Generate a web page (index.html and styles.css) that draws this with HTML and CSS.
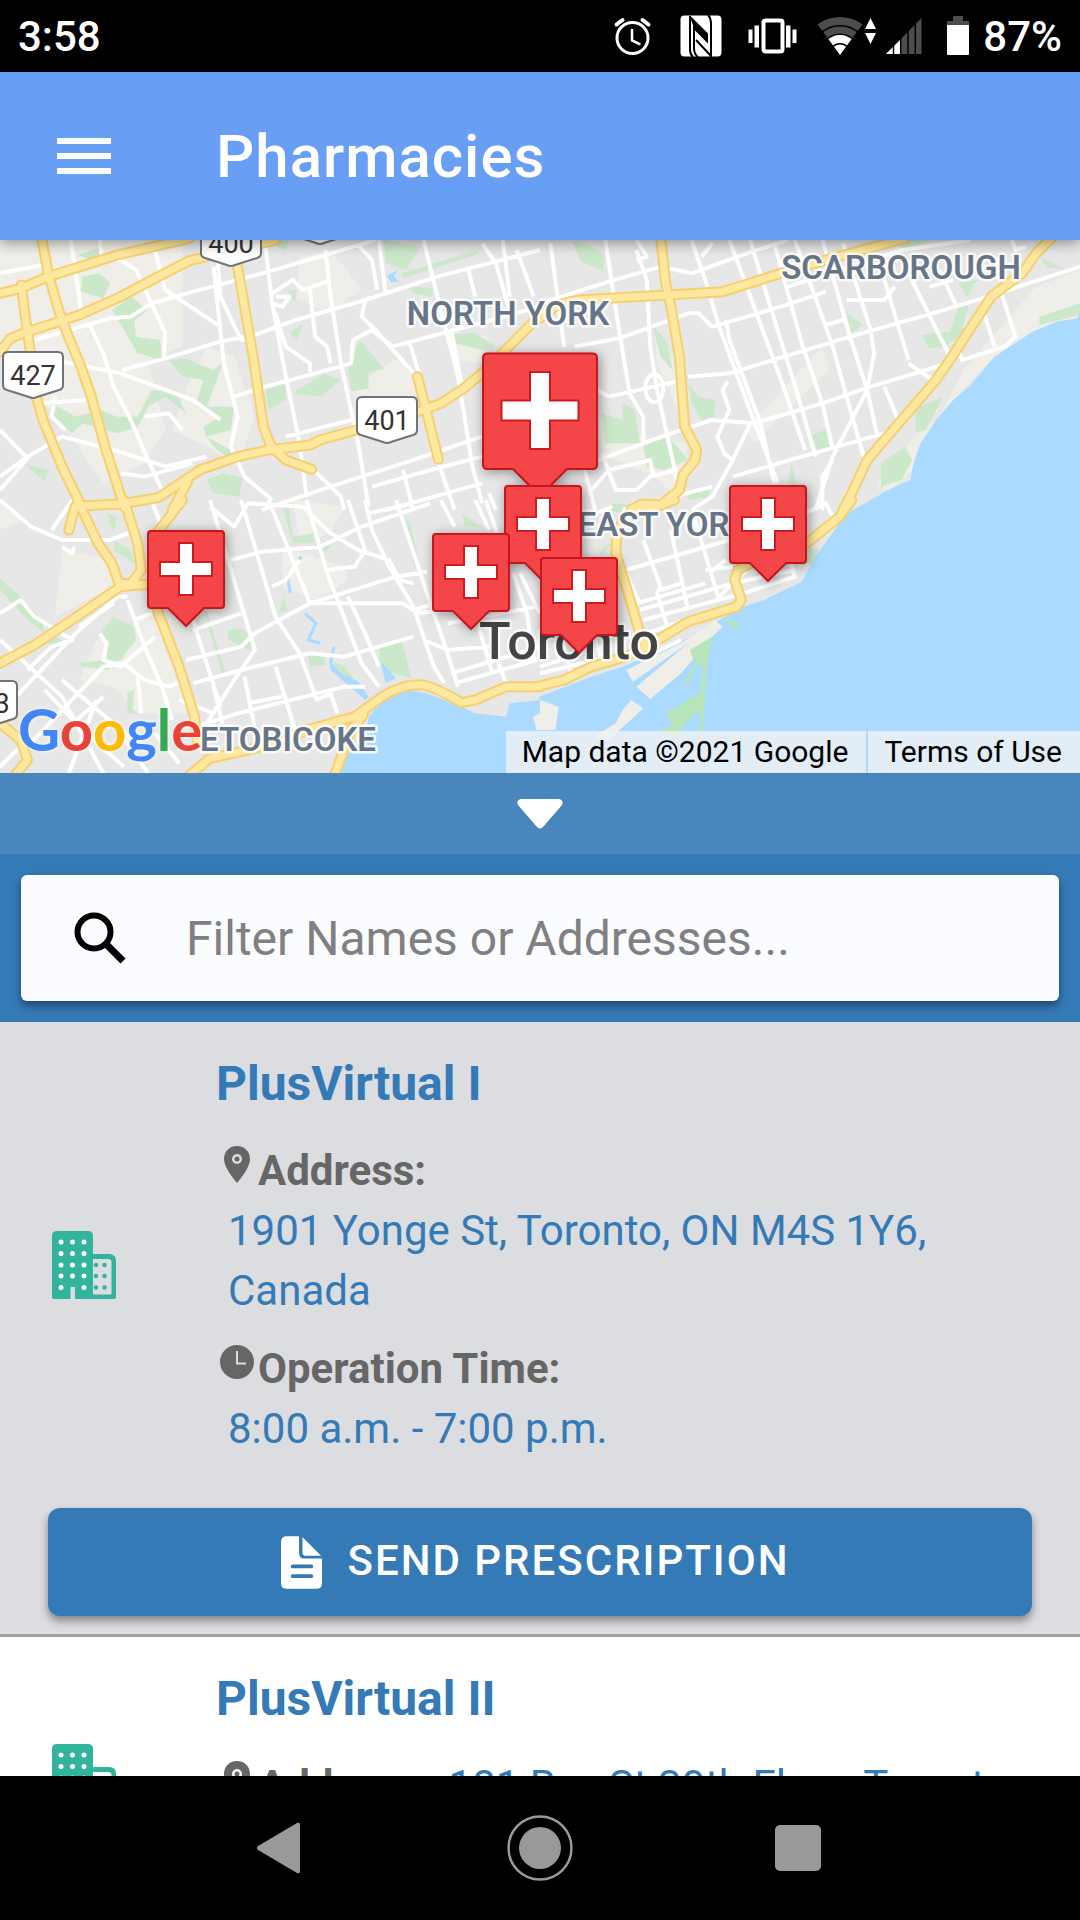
FILE: index.html
```html
<!DOCTYPE html>
<html lang="en">
<head>
<meta charset="utf-8">
<meta name="viewport" content="width=device-width, initial-scale=1">
<title>Pharmacies</title>
<link rel="stylesheet" href="styles.css">
</head>
<body>
<div class="app">
  <div class="status">
    <span>3:58</span>
    <svg class="tray" viewBox="0 0 360 72" aria-hidden="true">
      <defs><clipPath id="fan"><path d="M228 55 198 14H258Z"/></clipPath></defs>
      <g fill="none" stroke="#fff" stroke-width="3" stroke-linecap="round">
        <circle cx="20.5" cy="38" r="15.5"/>
        <path d="M20 30V40.500L27.500 44" stroke-width="2.500"/>
        <path d="M4.500 24.500 10.500 20M30.500 20 36.500 24.500" stroke-width="4"/>
      </g>
      <rect x="68.500" y="15.500" width="41" height="41" rx="4" fill="#fff"/>
      <path d="M78 16V50Q78 54 81 57M99 57V24Q99 18 96 15M78 17 95 34V41L82 28V48Q82 54 86 57M84 40 99 56" fill="none" stroke="#000" stroke-width="2"/>
      <path d="M78 17 95 34V42L82 28Z" fill="#000"/>
      <rect x="151.500" y="20.500" width="19" height="31" rx="2" fill="none" stroke="#fff" stroke-width="4"/>
      <path d="M136.500 29.500h4V43h-4zM142.500 25.500h4.500v22h-4.500zM174 25.500h4.500v22H174zM180.500 29.500h4V43h-4z" fill="#fff"/>
      <g clip-path="url(#fan)" fill="none" stroke-width="8">
        <circle cx="228" cy="54" r="33" stroke="#4d4d4d"/>
        <circle cx="228" cy="54" r="24" stroke="#4d4d4d" stroke-width="7"/>
        <circle cx="228" cy="54" r="15" stroke="#fff"/>
        <circle cx="228" cy="54" r="9.500" fill="#fff"/>
      </g>
      <path d="M253 29 258.500 18 264 29ZM253 33H264L258.500 44Z" fill="#fff"/>
      <path d="M274 54 309.500 18V54Z" fill="#4d4d4d"/>
      <path d="M274 54 288 40V54Z" fill="#fff"/>
      <path d="M281.500 18V55M288.700 18V55M296 18V55M303.300 18V55" stroke="#000" stroke-width="1.500"/>
      <path d="M335 25V21H341V16H351V21H357V25Z" fill="#4d4d4d"/>
      <path d="M335 25H357V54Q357 55 356 55H336Q335 55 335 54Z" fill="#fff"/>
    </svg>
    <span class="battery">87%</span>
  </div>

  <header class="bar">
    <button class="menu" type="button" aria-label="Menu">
      <svg viewBox="0 0 54 38" width="54" height="38"><path d="M0 4H54M0 19H54M0 34H54" stroke="#fafcff" stroke-width="6"/></svg>
    </button>
    <h1>Pharmacies</h1>
  </header>

  <section class="map" aria-label="Map">
    <svg class="tiles" viewBox="0 0 1080 533" preserveAspectRatio="xMidYMid slice">
      <defs>
        <g id="highways">
          <g transform="matrix(.3444 0 0 .3333 0 -10)">
            <path d="M0 190 60 175 140 140 340 75 550 25M0 365 30 325 80 305 230 255 350 200 450 145 550 92 620 75 800 30M62 165 72 250 90 380 105 500 125 570 180 710 235 825M120 20 140 130 170 240 195 310 235 410 265 500 305 650 360 830M685 80 735 380 765 590 785 645 830 690 905 718M225 828 350 822 460 803 530 755 580 720 690 680 780 660 900 645 930 630 1035 600 1230 540 1280 520 1340 480 1400 430 1540 285 1590 240M1212 440 1230 510 1273 688M545 755 500 840"/>
          </g>
          <g transform="matrix(.3444 0 0 .3333 540 -10)">
            <path d="M0 265 50 225 110 210 370 195 530 185 700 130 830 90 1060 25M350 20 365 160 380 230 405 380 420 590 455 660 450 690 415 735 405 780 350 825 300 822 265 838M1490 20 1440 70 1400 130 1310 200 1190 390 1150 450 950 690 900 800 880 840"/>
          </g>
          <g transform="matrix(.3444 0 0 .3333 0 260)">
            <path d="M225 0 285 130 325 190 345 250 420 255M218 20 200 90M360 0 400 130 410 210 385 245M530 0 455 100M0 490 100 435 230 345 350 260 450 250M440 260 460 340 520 500 565 650 572 720M545 830 610 775 700 755 820 725 890 690 1030 650 1110 590Q1170 550 1230 555 1270 565 1340 608L1380 600 1470 560 1568 560M1055 645 1020 690 970 830M0 670 60 720 80 780 40 830"/>
          </g>
          <g transform="matrix(.3444 0 0 .3333 540 260)">
            <path d="M-10 560 70 540 150 500 250 470 310 440M390 0 340 20 290 15 240 60 222 120 220 160 250 260 290 400 310 440M905 0 870 50 780 125 730 150 610 190 575 210 565 240 585 300 570 320 430 365 350 415 310 440"/>
          </g>
        </g>
        <g id="pin">
          <path d="M-35 -95H35Q38 -95 38 -92V-21Q38 -18 35 -18H18L0 0-18 -18H-35Q-38 -18-38 -21V-92Q-38 -95-35 -95Z" fill="#f44548" stroke="#c8141c" stroke-width="2"/>
          <path d="M-6 -82H6V-63H25V-51H6V-32H-6V-51H-25V-63H-6Z" fill="#fff" stroke="#d01a22" stroke-width="4" paint-order="stroke"/>
        </g>
        <path id="shield" d="M-25 0H25Q30 0 30 5V33Q30 37 26 38L4 45Q0 47-4 45L-26 38Q-30 37-30 33V5Q-30 0-25 0Z" fill="#fff" stroke="#707478" stroke-width="2"/>
      </defs>

      <rect width="1080" height="533" fill="#e7e7e7"/>

      <g class="suburb">
        <g transform="matrix(.3444 0 0 .3333 0 -10)">
          <path d="M0 20H530V350L430 390 480 600 420 700 300 760 220 640 130 520 0 360ZM600 350 680 380 740 560 690 700 600 650 500 600 540 480ZM870 80 960 60 1050 180 950 250 860 200ZM1010 480 1160 380 1220 470 1180 560 1040 520ZM1290 300 1420 320 1400 400 1320 390Z"/>
        </g>
        <g transform="matrix(.3444 0 0 .3333 540 -10)">
          <path d="M1568 120 1440 170 1330 300 1230 420 1160 560 1070 640 980 760 1010 790 1080 720 1110 630 1200 510 1320 380 1430 305 1568 260ZM820 350 840 420 740 520 620 640 600 600 720 460ZM330 280 400 420 400 540 340 400ZM160 560 300 620 430 640 400 800 330 740 180 670Z"/>
        </g>
        <g transform="matrix(.3444 0 0 .3333 0 260)">
          <path d="M0 90 70 60 0 0ZM180 150 350 180 330 260 160 350ZM360 400 440 330 520 560 560 640 400 640 330 560 230 540 280 420ZM820 140 1000 200 1010 240 920 300 820 260ZM850 0 1000 20 960 100 870 130Z"/>
        </g>
      </g>

      <g class="park">
        <g transform="matrix(.3444 0 0 .3333 0 -10)">
          <path d="M240 140 290 130 320 160 300 205 235 185ZM225 75 300 50 290 100ZM325 240 380 200 430 240 390 270 395 320 465 330 470 390 400 370 360 300ZM490 390 540 385 570 400 620 420 650 395 600 530 680 530 670 600 600 620 590 590 640 560 570 520 590 450 530 440ZM150 520 220 560 290 540 340 560 400 560 440 480 510 490 540 550 480 500 430 530 400 590 340 610 240 580 210 610 150 570ZM770 480 830 460 830 510 780 540ZM850 490 940 430 990 450 930 500ZM1045 330 1115 415 1070 430 1070 475 1020 485 1010 410ZM1115 30 1220 50 1180 120 1120 100ZM1165 130 1390 60 1380 75 1170 145ZM1190 170 1260 175 1250 200 1200 190ZM1320 310 1380 310 1440 350 1400 360 1320 340ZM600 750 650 730 705 745 695 800 620 790ZM68 700 140 720 130 755ZM780 40 840 30 830 60ZM835 180 862 180 855 220ZM840 310 880 280 865 330ZM600 620 670 660 670 690 620 650Z"/>
        </g>
        <g transform="matrix(.3444 0 0 .3333 540 -10)">
          <path d="M90 30 150 50 185 75 185 125 120 95ZM325 280 370 340 385 420 350 380ZM430 460 460 500 510 510 505 560 470 570 440 520ZM240 520 275 540 290 640 190 640 180 550 240 570ZM300 640 370 620 400 650 430 690 360 720 310 710ZM890 250 940 285 900 310ZM1110 315 1190 305 1215 230 1245 225 1220 320 1170 350 1130 355ZM790 615 835 597 852 655 805 667ZM1090 535 1170 500 1120 600 1090 605ZM990 700 1060 650 1080 690 1050 750 990 770ZM1450 260 1568 220V255L1450 285ZM1215 160 1270 150 1240 200ZM1020 30 1130 30 1060 60ZM1450 80 1530 120 1470 110ZM430 790 490 770 490 800 430 810ZM730 700 745 765 720 760Z"/>
        </g>
        <g transform="matrix(.3444 0 0 .3333 0 260)">
          <path d="M330 350 390 380 395 420 350 480 310 490 310 440 290 400ZM230 490 300 480 320 510 240 500ZM0 235 60 290 120 360 130 400 70 350 0 270ZM130 400 180 420 190 460 140 430ZM660 390 700 385 735 415 725 450 665 420ZM1105 435 1165 417 1195 535 1120 515 1100 480ZM820 20 840 20 850 110 910 100 910 130 850 130ZM895 470 940 465 945 495 900 500ZM955 480 1000 500 1040 550 970 510ZM330 120 380 150 390 190 330 150ZM370 575 390 570 385 630 400 640 370 640ZM1170 60 1190 65 1220 200 1205 205ZM1340 40 1400 80 1350 80ZM825 290 835 335 810 335ZM310 40 340 50 330 100ZM600 335 655 520 645 525 595 340ZM930 145 965 130 940 165Z"/>
        </g>
        <g transform="matrix(.3444 0 0 .3333 540 260)">
          <path d="M190 135 210 130 170 170ZM210 10 260 15 240 40 200 30ZM780 140 810 150 790 195 770 190Z"/>
        </g>
      </g>

      <g class="water">
        <g transform="matrix(.3444 0 0 .3333 540 -10)">
          <path d="M1568 250 1560 265 1500 275 1430 305 1320 380 1250 465 1200 510 1150 570 1105 640 1085 700 1075 750 1010 780 970 805 910 845H1568Z"/>
        </g>
        <g transform="matrix(.3444 0 0 .3333 0 260)">
          <path d="M1570 600 1480 610 1470 650 1380 640 1340 620 1240 580 1180 570 1110 600 1070 650 1065 700 1000 775 990 825H1570ZM1105 485 1150 535 1120 550ZM955 480 990 520 1040 545 1070 590 1060 600 1000 545 960 510Z"/>
          <path class="creek" d="M875 170 835 230 843 280M885 340 917 370 895 420 930 430M970 440 960 490"/>
        </g>
        <g transform="matrix(.3444 0 0 .3333 540 260)">
          <path d="M970-5 890 40 800 170 760 245 650 300 590 320 520 360 420 420 240 500 150 530 -2 590V820H1570V-5Z"/>
        </g>
        <path d="M387 36 398 30 394 36 399 42 391 42Z"/>
      </g>

      <g transform="matrix(.3444 0 0 .3333 540 260)">
        <path class="shore" d="M250 510 410 430 510 360 530 380 500 410 410 520 320 597 280 560 430 430 270 545ZM0 600 55 620 45 690 0 690ZM265 600 300 625 200 720 150 715 220 670 240 630ZM-20 650 0 640V690H-10Z"/>
        <path class="spit" d="M435 450 500 410 485 500 472 700 462 695 465 630 430 660 410 690 400 720 350 690 385 680 365 640 400 620 440 590 465 580 472 495 450 500 430 560 420 550 450 490ZM530 350 575 370 575 395Z"/>
      </g>

      <g class="streets">
        <g transform="matrix(.3444 0 0 .3333 0 -10)">
          <path d="M0 130 125 105M205 30 220 130 235 240M290 30 295 80 350 90 395 120 440 220 480 310 475 390M450 60 480 180 640 290M100 330 200 300 320 265 380 260 440 220 560 185 780 125 960 70 1090 30M260 285 300 370 330 470 380 570 430 690 470 780M355 420 480 385 640 335 740 315 860 270 1060 210 1270 140 1568 60M180 395 350 430 480 480 560 510 640 570M620 110 650 400 680 520 690 560 670 650 710 740 790 810M630 60 640 200 700 330 740 330M770 40 790 220 830 440 870 640 890 800M945 60 960 200 990 400 1040 640 1070 830M1100 30 1120 190M1230 30 1270 200 1330 440 1370 700 1400 820M770 470 880 440 1020 400 1025 330 1080 300 1140 350 1568 230M1040 45 1080 90 1095 180M1060 210 1050 260 1090 300 1150 370 1210 440M900 180 915 320 950 350 960 400M800 250 830 350 900 400 900 425M790 190 850 150 880 180 950 155M800 200 840 200 820 230 790 220M0 740 80 680 180 620 330 660 480 710 600 680M0 600 80 685 0 780M120 520 250 510M160 500 150 560 190 600M420 560 490 550 530 600M680 500 770 470M830 620 1020 570M760 840 960 770 1170 700 1400 620M900 710 990 800 1000 840M1360 120 1380 200M1400 40 1440 100 1490 280M1460 30 1480 200M1500 60 1550 200M1190 340 1240 510M1080 770 1250 720 1400 680M1120 840 1400 760M1270 690 1320 840M1170 720 1200 840M1310 300 1340 460M1420 790 1440 840M350 730 420 740 560 700"/>
        </g>
        <g transform="matrix(.3444 0 0 .3333 540 -10)">
          <path d="M30 40 70 350M190 30 220 240 260 490 300 560 300 640M0 220 200 155 350 110 440 130 600 70 720 30M280 60 310 150 320 350 340 480 370 620 400 760M100 350 230 325 430 250 460 250 500 290 700 230 830 185M440 30 480 150 520 290 620 570 690 760M550 30 600 170 700 450 770 660M610 30 660 200 750 500 800 680M680 40 760 340 820 520 850 660M740 30 850 350 890 500 940 680M820 30 900 320 950 480 980 620M880 40 960 300 970 370 950 480 850 680 800 840M430 440 550 430 740 370 900 320 1140 250 1300 200 1568 110M200 500 350 465 420 450M440 590 500 570 620 580 820 520 960 470 1170 405M540 270 550 330 640 580 680 760M545 455 530 480 550 540 515 620 535 670 560 690M610 580 560 690 500 800 440 840M560 740 760 680 1000 610M850 690 820 740 820 840M1000 150 1070 390M1080 150 1190 380M1160 120 1210 230M1280 220 1320 350M1340 190 1380 320 1350 350 1225 390 1215 360M890 210 1000 210 1030 170M720 170 780 150 1050 60 1250 30M1000 470 1040 570M1070 400 1140 450M170 690 380 610 470 580M150 780 200 720 320 690 330 740M180 670 220 780 280 780 320 740 400 720M100 440 200 500M830 285 880 270M130 720 160 840M280 30 310 80 280 90M470 80 500 40M1370 30 1380 60 1410 50M1130 170 1200 150M940 690 870 840"/>
          <ellipse cx="332" cy="475" rx="26" ry="42"/>
        </g>
        <g transform="matrix(.3444 0 0 .3333 0 260)">
          <path d="M0 0 90 80 180 120 320 120 400 90M210 0 150 90M0 420 180 590 300 820M0 640 120 510 220 400 340 290 370 290M80 740 300 500 360 490 420 540 490 560M0 340 60 300 100 350 210 420 150 440 80 510M370 300 420 440 470 560 500 660M390 360 440 340M290 400 310 430 300 480 350 500 450 410M180 540 340 680 420 750M130 570 240 690 360 800M200 680 300 590M540 480 700 440 740 400 900 310 1170 310 1200 330 1300 300 1420 280M560 550 700 510 900 460 1000 470 1200 410M600 670 680 540 740 450 720 380 610 0M700 0 800 350 870 460 920 600 960 580 980 640M780 0 900 310M670 180 760 155 930 140 1050 80 1250 10M610 20 680 80 720 10 880 20 960 100 1040 150 1130 180 1160 240 1200 250M890 0 950 220 1050 490 1100 560M1010 0 1060 150 1030 200 950 210M1070 40 1200 10M1060 0 1080 90 1130 200 1200 320 1260 500 1290 550M1150 0 1240 280 1290 430 1330 560M1280 0 1320 80M1410 0 1450 120M790 260 830 240 870 180M1010 290 1060 400 1100 500M900 310 1150 230 1240 215M1200 340 1320 330M1230 420 1300 450 1420 440M1300 370 1560 320M1320 550 1560 480M1310 520 1568 440M1490 220 1530 340 1550 480M1510 220 1568 340M1390 380 1430 520M1440 470 1470 550M570 680 690 640 1000 560 1060 560M710 530 750 740M620 560 650 690M560 390 700 340M490 560 540 540M560 360 640 620M440 0 480 110M1380 0 1420 90M180 140 210 160 215 140M230 380 330 310M720 610 820 590M800 500 860 700M400 530 410 640M280 600 200 820M520 600 620 640M350 700 430 820M450 700 520 790M0 800 80 720"/>
        </g>
        <g transform="matrix(.3444 0 0 .3333 540 260)">
          <path d="M240 30 500 -40M250 210 550 120M290 330 560 250 740 210M280 310 480 250M300 360 590 280M310 400 480 340M300 120 350 260 340 280 370 380M380 90 430 330M450 60 520 300M250 220 290 310M410 250 350 270M490 220 540 180M0 520 200 470M0 500 180 440M480 210 560 200M720 160 740 230 590 280M600 210 520 290M770 40 830 10 850 50M120 60 210 20M60 400 90 520M150 380 180 490M310 470 410 420"/>
        </g>
      </g>

      <use href="#highways" class="casing"/>
      <use href="#highways" class="fill"/>

      <use href="#shield" x="33" y="112"/><use href="#shield" x="231" y="-20"/><use href="#shield" x="387" y="157"/><use href="#shield" x="-13" y="441"/><use href="#shield" x="320" y="-42"/>
      <g class="route">
        <text x="33" y="145">427</text><text x="231" y="13">400</text><text x="387" y="190">401</text><text x="-13" y="473">403</text>
      </g>
      <g class="place">
        <text x="508" y="85">NORTH YORK</text>
        <text x="901" y="39">SCARBOROUGH</text>
        <text x="664" y="296">EAST YORK</text>
        <text x="288" y="511">ETOBICOKE</text>
      </g>
      <text class="city" x="569" y="419">Toronto</text>

      <g class="pins">
        <use href="#pin" transform="translate(540 256) scale(1.5)"/>
        <use href="#pin" x="186" y="386"/>
        <use href="#pin" x="543" y="341"/>
        <use href="#pin" x="471" y="389"/>
        <use href="#pin" x="768" y="341"/>
        <use href="#pin" x="579" y="413"/>
      </g>
    </svg>
    <div class="credits">
      <a class="logo" href="#"><span class="b">G</span><span class="r">o</span><span class="y">o</span><span class="b">g</span><span class="g">l</span><span class="r">e</span></a>
      <span class="credit">Map data ©2021 Google</span>
      <a class="credit" href="#">Terms of Use</a>
    </div>
  </section>

  <button class="toggle" type="button" aria-label="Collapse map">
    <svg viewBox="0 0 46 30" width="46" height="30"><path d="M4 0H42Q47 1 45 6L26 28Q23 31 20 28L1 6Q-1 1 4 0Z" fill="#fff"/></svg>
  </button>

  <div class="search">
    <label class="field">
      <svg viewBox="0 0 52 52" width="52" height="52" aria-label="Filter" role="img"><circle cx="20" cy="20" r="16.5" fill="none" stroke="#000" stroke-width="6"/><path d="M32 32 49 49" stroke="#000" stroke-width="7"/></svg>
      <input type="search" placeholder="Filter Names or Addresses...">
    </label>
  </div>

  <main class="list">
    <article class="item selected">
      <div class="row">
        <svg class="building" viewBox="0 0 64 68" width="64" height="68" aria-hidden="true">
          <g id="building">
            <path d="M5 0H36Q41 0 41 5V23H57Q64 23 64 30V66Q64 68 62 68H23V56H18.500V68H2Q0 68 0 66V5Q0 0 5 0ZM41 28V63.500H59.500V31Q59.500 28 56 28Z" fill="#32b39b" fill-rule="evenodd"/>
            <path d="M9 11h0M20.500 11h0M32 11h0M9 22.500h0M20.500 22.500h0M32 22.500h0M9 34h0M20.500 34h0M32 34h0M9 45h0M20.500 45h0M32 45h0M9 56.500h0M32 56.500h0" class="panes"/>
            <path d="M44 34h0M52.500 34h0M44 45h0M52.500 45h0M44 56.500h0M52.500 56.500h0" stroke="#32b39b" stroke-width="4.500" stroke-linecap="round"/>
          </g>
        </svg>
        <div class="info">
          <h2>PlusVirtual I</h2>
          <p class="stacked"><svg class="glyph" viewBox="0 0 36 36" aria-hidden="true"><path id="place" fill-rule="evenodd" d="M18 0C10 0 5 6 5 13C5 20 12 30 18 37C24 30 31 20 31 13C31 6 26 0 18 0ZM18 8A5 5 0 1 1 18 18A5 5 0 1 1 18 8ZM18 10.500A2.500 2.500 0 1 0 18 15.500A2.500 2.500 0 1 0 18 10.500Z"/></svg><b>Address:</b> <a href="#">1901 Yonge St, Toronto, ON M4S 1Y6, Canada</a></p>
          <p class="stacked"><svg class="glyph" viewBox="0 0 36 36" aria-hidden="true"><circle cx="18" cy="18" r="17"/><path d="M18 7V19.500H27" fill="none" stroke="#dcdde1" stroke-width="2"/></svg><b>Operation Time:</b> <span class="value">8:00 a.m. - 7:00 p.m.</span></p>
        </div>
      </div>
      <button class="send" type="button">
        <svg viewBox="0 0 42 54" width="41" height="53" aria-hidden="true"><path d="M6 0H18.500V17Q18.500 23 24 23H42V48Q42 54 36 54H6Q0 54 0 48V6Q0 0 6 0ZM22 1 41 20H25Q22 20 22 17Z" fill="#fff"/><path d="M12 31H31M12 41H31" stroke="#347ab7" stroke-width="4" stroke-linecap="round"/></svg>
        <span>Send Prescription</span>
      </button>
    </article>

    <article class="item">
      <div class="row">
        <svg class="building" viewBox="0 0 64 68" width="64" height="68" aria-hidden="true"><use href="#building"/></svg>
        <div class="info">
          <h2>PlusVirtual II</h2>
          <p><svg class="glyph" viewBox="0 0 36 36" aria-hidden="true"><use href="#place"/></svg><b>Address:</b> <a href="#">181 Bay St 30th Floor, Toronto</a></p>
        </div>
      </div>
    </article>
  </main>

  <nav class="system">
    <button type="button" aria-label="Back"><svg viewBox="0 0 66 66" width="66" height="66"><path d="M9 31 48 8Q51 7 51 10V56Q51 59 48 58L9 35Q7 33 9 31Z" fill="#999"/></svg></button>
    <button type="button" aria-label="Home"><svg viewBox="0 0 66 66" width="66" height="66"><circle cx="33" cy="33" r="31.500" fill="none" stroke="#999" stroke-width="2.500"/><circle cx="33" cy="33" r="21" fill="#999"/></svg></button>
    <button type="button" aria-label="Recent apps"><svg viewBox="0 0 66 66" width="66" height="66"><rect x="10" y="10" width="46" height="46" rx="5" fill="#999"/></svg></button>
  </nav>
</div>
</body>
</html>
```
FILE: styles.css
```css
* {
  box-sizing: border-box;
}

body {
  margin: 0;
  font-family: Roboto, "Liberation Sans", sans-serif;
  background: #000;
}

button {
  margin: 0;
  padding: 0;
  border: 0;
  background: none;
  font: inherit;
}

a {
  color: inherit;
  text-decoration: none;
}

svg {
  flex: none;
}

.app {
  display: flex;
  flex-direction: column;
  height: 100vh;
}

.status {
  flex: none;
  display: flex;
  align-items: center;
  height: 72px;
  padding: 0 18px;
  background: #000;
  color: #fff;
  font-size: 42px;
  font-weight: 500;
}

.tray {
  width: 360px;
  height: 72px;
  margin-left: auto;
}

.battery {
  margin-left: 11px;
}

.bar {
  flex: none;
  display: flex;
  align-items: center;
  height: 168px;
  padding-left: 57px;
  position: relative;
  z-index: 1;
  background: #699ef5;
  color: #fff;
  box-shadow: 0 2px 14px rgba(0, 0, 0, .45);
}

.menu {
  display: flex;
  width: 159px;
}

h1 {
  margin: 0;
  font-size: 60px;
  font-weight: 500;
  letter-spacing: 1px;
}

.map {
  flex: none;
  position: relative;
  height: 533px;
  overflow: hidden;
}

.tiles {
  display: block;
  width: 100%;
  height: 100%;
}

.tiles path,
.tiles ellipse {
  vector-effect: non-scaling-stroke;
}

.suburb { fill: #efeee8; }
.park { fill: #cce8cb; }
.water { fill: #aadaff; }
.shore { fill: #efeee8; }
.spit { fill: #b8e4bc; }

.creek {
  fill: none;
  stroke: #aadaff;
  stroke-width: 3;
}

.streets {
  fill: none;
  stroke: #fff;
  stroke-width: 4;
  stroke-linejoin: round;
}

.casing,
.fill {
  fill: none;
  stroke: #f6d06e;
  stroke-width: 11;
  stroke-linecap: round;
  stroke-linejoin: round;
}

.fill {
  stroke: #fee89f;
  stroke-width: 7;
}

.route,
.place,
.city {
  text-anchor: middle;
}

.route {
  font-size: 27px;
  fill: #333;
}

.place {
  font-size: 33px;
  font-weight: 600;
  fill: #667587;
}

.place,
.city {
  stroke: rgba(255, 255, 255, .85);
  stroke-width: 5px;
  stroke-linejoin: round;
  paint-order: stroke;
}

.city {
  font-size: 52px;
  font-weight: 500;
  fill: #444;
}

.pins {
  filter: drop-shadow(2px 2px 6px rgba(0, 0, 0, .4));
}

.credits {
  position: absolute;
  inset: auto 0 0;
  display: flex;
  align-items: flex-end;
  gap: 2px;
}

.logo {
  margin: 0 auto 8px 18px;
  font: 58px/72px Lato, sans-serif;
  font-weight: 700;
  text-shadow: 0 0 4px #fff;
}

.b { color: #4285f4; }
.r { color: #ea4335; }
.y { color: #fbbc05; }
.g { color: #34a853; }

.credit {
  padding: 0 18px 0 16px;
  background: rgba(240, 241, 243, .8);
  color: #000;
  font-size: 30px;
  line-height: 42px;
}

.toggle {
  flex: none;
  display: flex;
  align-items: center;
  justify-content: center;
  height: 81px;
  background: #4886bd;
}

.search {
  flex: none;
  padding: 21px;
  background: #347ab7;
}

.field {
  display: flex;
  align-items: center;
  gap: 60px;
  height: 126px;
  padding: 0 53px;
  border-radius: 6px;
  background: #fafcff;
  box-shadow: 0 5px 8px rgba(0, 0, 0, .4);
}

.field input {
  flex: 1;
  min-width: 0;
  padding: 0;
  border: 0;
  outline: 0;
  background: none;
  font: 48px Roboto, sans-serif;
}

.field input::placeholder {
  color: #808080;
}

.list {
  flex: 1;
  min-height: 0;
  overflow: hidden;
  background: #fff;
}

.item {
  border-bottom: 3px solid #a0a0a6;
}

.selected {
  padding-bottom: 18px;
  background: #dcdde1;
}

.row {
  display: flex;
  align-items: center;
  min-height: 282px;
  padding-left: 52px;
}

.selected .row {
  min-height: 486px;
}

.panes {
  stroke: #fff;
  stroke-width: 5;
  stroke-linecap: round;
}

.info {
  flex: 1;
  align-self: flex-start;
  padding: 32px 48px 0 100px;
  font-size: 42px;
  line-height: 60px;
  color: #666;
}

h2 {
  margin: 0 0 27px;
  font-size: 48px;
  line-height: 60px;
  color: #347ab7;
}

.info p {
  margin: 0 0 18px;
}

.glyph {
  width: 36px;
  height: 36px;
  margin: 0 3px;
  vertical-align: 3px;
  fill: #666;
  overflow: visible;
}

.info a,
.value {
  display: inline-block;
  padding-left: 12px;
  color: #347ab7;
}

.stacked a,
.stacked .value {
  display: block;
}

.send {
  display: flex;
  align-items: center;
  justify-content: center;
  gap: 26px;
  width: calc(100% - 96px);
  height: 108px;
  margin: 0 48px;
  padding-right: 10px;
  border-radius: 12px;
  background: #347ab7;
  color: #fff;
  font-size: 42px;
  font-weight: 500;
  letter-spacing: 2px;
  text-transform: uppercase;
  box-shadow: 0 5px 9px rgba(0, 0, 0, .4);
}

.send span {
  padding-bottom: 4px;
}

.system {
  flex: none;
  display: flex;
  justify-content: center;
  height: 144px;
  background: #000;
}

.system button {
  display: flex;
  align-items: center;
  justify-content: center;
  flex: 0 1 258px;
}
```
